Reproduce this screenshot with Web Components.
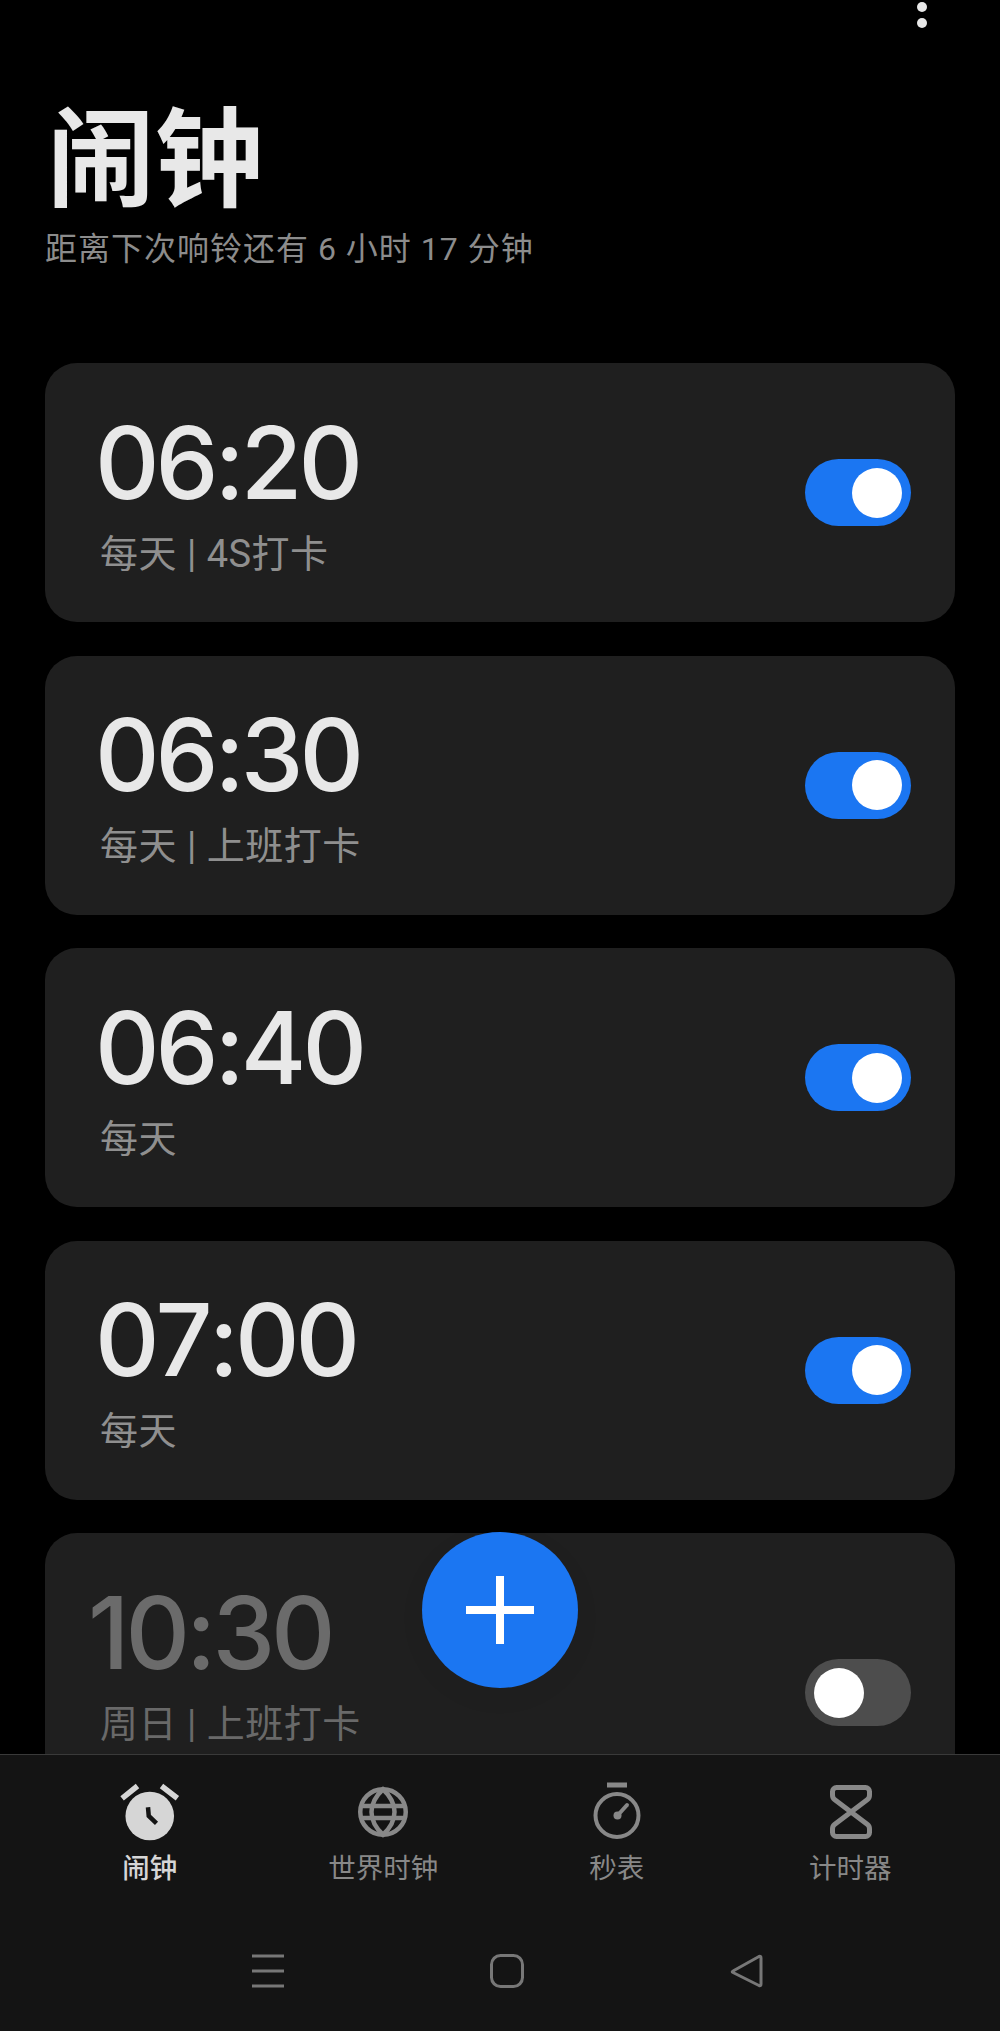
<!DOCTYPE html>
<html lang="zh">
<head>
<meta charset="utf-8">
<title>闹钟</title>
<style>
  html, body { margin: 0; background: #000; }
  body { font-family: Roboto, "Noto Sans CJK SC", sans-serif; }
</style>
</head>
<body>
<clock-app>
  <page-header slot="header" titulo="闹钟" subtitulo="距离下次响铃还有 6 小时 17 分钟"></page-header>
  <alarm-card slot="list" hora="06:20" detalle="每天 | 4S打卡" activa></alarm-card>
  <alarm-card slot="list" hora="06:30" detalle="每天 | 上班打卡" activa></alarm-card>
  <alarm-card slot="list" hora="06:40" detalle="每天" activa></alarm-card>
  <alarm-card slot="list" hora="07:00" detalle="每天" activa></alarm-card>
  <alarm-card slot="list" hora="10:30" detalle="周日 | 上班打卡"></alarm-card>
  <add-button slot="fab"></add-button>
  <tab-bar slot="tabs">
    <tab-item etiqueta="闹钟" icono="alarma" activo></tab-item>
    <tab-item etiqueta="世界时钟" icono="mundo"></tab-item>
    <tab-item etiqueta="秒表" icono="crono"></tab-item>
    <tab-item etiqueta="计时器" icono="reloj-arena"></tab-item>
  </tab-bar>
  <system-nav slot="sistema"></system-nav>
</clock-app>

<script>
class ClockApp extends HTMLElement {
  constructor() {
    super();
    this.attachShadow({ mode: 'open' });
    this.shadowRoot.innerHTML = `
      <style>
        :host { display: flex; flex-direction: column; width: 1000px; height: 2031px; position: relative; overflow: hidden; background: #000; }
        .contenido { flex: 1; min-height: 0; overflow: hidden; }
        .lista { display: flex; flex-direction: column; gap: 33.5px; padding: 0 45px; }
        .dots { display: flex; flex-direction: column; gap: 6px; position: absolute; top: 2px; left: 917px; }
        .dots i { width: 10px; height: 10px; border-radius: 50%; background: #e8e8e8; }
        .pie { background: #141414; border-top: 1px solid #3a3a3a; height: 276px; display: flex; flex-direction: column; }
      </style>
      <div class="dots"><i></i><i></i></div>
      <div class="contenido">
        <slot name="header"></slot>
        <div class="lista"><slot name="list"></slot></div>
      </div>
      <slot name="fab"></slot>
      <div class="pie">
        <slot name="tabs"></slot>
        <slot name="sistema"></slot>
      </div>
    `;
  }
}

class PageHeader extends HTMLElement {
  constructor() {
    super();
    this.attachShadow({ mode: 'open' });
  }
  connectedCallback() {
    this.shadowRoot.innerHTML = `
      <style>
        :host { display: block; height: 363px; box-sizing: border-box; padding: 91px 0 0 45px; }
        h1 { margin: 0 0 0 2px; font: 700 108px/120px "Noto Sans CJK SC", sans-serif; color: #e8e8e8; }
        p { margin: 14px 0 0; font: 400 32px/48px Roboto, "Noto Sans CJK SC", sans-serif; color: #8c8c8c; letter-spacing: 1px; }
      </style>
      <h1>${this.getAttribute('titulo')}</h1>
      <p>${this.getAttribute('subtitulo')}</p>
    `;
  }
}

class AlarmCard extends HTMLElement {
  constructor() {
    super();
    this.attachShadow({ mode: 'open' });
  }
  connectedCallback() {
    const activa = this.hasAttribute('activa');
    this.shadowRoot.innerHTML = `
      <style>
        :host { display: flex; align-items: center; justify-content: space-between; height: 259px; box-sizing: border-box; padding: 0 44px 0 55px; background: #1f1f1f; border-radius: 32px; }
        .hora { font: 450 100px/120px Inter, Roboto, sans-serif; font-kerning: none; color: #e8e8e8; margin: -3px 0 0 -5px; letter-spacing: -4px; }
        .detalle { font: 400 38px/52px Roboto, "Noto Sans CJK SC", sans-serif; color: #8f8f8f; margin-top: 5px; letter-spacing: .5px; }
        :host(:not([activa])) .hora { color: #6b6b6b; margin-left: -12px; }
        :host(:not([activa])) .detalle { color: #696969; }
        :host(:not([activa])) alarm-switch { margin-top: 60px; }
      </style>
      <div>
        <div class="hora">${this.getAttribute('hora')}</div>
        <div class="detalle">${this.getAttribute('detalle')}</div>
      </div>
      <alarm-switch ${activa ? 'activa' : ''}></alarm-switch>
    `;
  }
}

class AlarmSwitch extends HTMLElement {
  constructor() {
    super();
    this.attachShadow({ mode: 'open' });
    this.shadowRoot.innerHTML = `
      <style>
        :host { display: flex; align-items: center; justify-content: flex-start; width: 106px; height: 67px; box-sizing: border-box; padding: 0 9px; border-radius: 34px; background: #4d4d4d; }
        :host([activa]) { background: #1b76f2; justify-content: flex-end; }
        i { width: 50px; height: 50px; border-radius: 50%; background: #fff; }
      </style>
      <i></i>
    `;
  }
}

class AddButton extends HTMLElement {
  constructor() {
    super();
    this.attachShadow({ mode: 'open' });
    this.shadowRoot.innerHTML = `
      <style>
        :host { position: absolute; left: 422px; top: 1532px; width: 156px; height: 156px; border-radius: 50%; background: #1b76f2; display: flex; align-items: center; justify-content: center; box-shadow: 0 8px 30px rgba(0,0,0,.04); }
      </style>
      <svg width="68" height="68" viewBox="0 0 68 68"><path d="M30 0h8v30h30v8H38v30h-8V38H0v-8h30z" fill="#fff"/></svg>
    `;
  }
}

const ICONOS = {
  alarma: `<circle cx="29.750" cy="34" r="24.300" fill="currentColor"/>
    <path d="M2.100 16.300 17.500 4M41.500 4 57.400 16.300" stroke="currentColor" stroke-width="5.500" fill="none"/>
    <path d="M28 25.300l.75 8.700 7.750 7.300" stroke="#141414" stroke-width="4.500" fill="none"/>`,
  mundo: `<g fill="none" stroke="currentColor" stroke-width="4.500">
    <circle cx="30" cy="30" r="22.750"/>
    <path d="M30 7.250Q18.500 18 18.500 30T30 52.750Q41.500 42 41.500 30T30 7.250z"/>
    <path d="M8 24h44M8 36h44"/></g>`,
  crono: `<g fill="none" stroke="currentColor">
    <circle cx="30" cy="33.500" r="21.500" stroke-width="4"/>
    <path d="M20 3h20" stroke-width="5"/>
    <path d="M31 33l9-10" stroke-width="4" stroke-linecap="round"/></g>
    <circle cx="30.500" cy="33.500" r="4" fill="currentColor"/>`,
  'reloj-arena': `<path d="M16.500 5.500h29a4 4 0 0 1 4 4V13q0 3-2 4.500L14.500 42.500q-2 1.500-2 4.500v3.500a4 4 0 0 0 4 4h29a4 4 0 0 0 4-4V47q0-3-2-4.500L14.500 17.500q-2-1.500-2-4.500V9.500a4 4 0 0 1 4-4z" fill="none" stroke="currentColor" stroke-width="5"/>`
};

class TabBar extends HTMLElement {
  constructor() {
    super();
    this.attachShadow({ mode: 'open' });
    this.shadowRoot.innerHTML = `
      <style>
        :host { display: grid; grid-template-columns: repeat(4, 1fr); padding: 0 33px; height: 164px; box-sizing: border-box; }
      </style>
      <slot></slot>
    `;
  }
}

class TabItem extends HTMLElement {
  constructor() {
    super();
    this.attachShadow({ mode: 'open' });
  }
  connectedCallback() {
    this.shadowRoot.innerHTML = `
      <style>
        :host { display: flex; flex-direction: column; align-items: center; padding-top: 27px; color: #888; }
        :host([activo]) { color: #d6d6d6; }
        svg { display: block; width: 60px; height: 60px; }
        span { margin-top: 6px; font: 400 27.500px/36px "Noto Sans CJK SC", sans-serif; }
        :host([activo]) span { font-weight: 500; }
      </style>
      <svg viewBox="0 0 60 60">${ICONOS[this.getAttribute('icono')]}</svg>
      <span>${this.getAttribute('etiqueta')}</span>
    `;
  }
}

class SystemNav extends HTMLElement {
  constructor() {
    super();
    this.attachShadow({ mode: 'open' });
    this.shadowRoot.innerHTML = `
      <style>
        :host { display: flex; justify-content: center; align-items: center; gap: 205px; height: 112px; box-sizing: border-box; color: #777; padding: 0 0 9px 13px; }
        svg { display: block; width: 34px; height: 34px; fill: none; stroke: currentColor; stroke-width: 3; }
      </style>
      <svg viewBox="0 0 34 34"><path d="M1 2h32M1 17h32M1 32h32"/></svg>
      <svg viewBox="0 0 34 34"><rect x="1.500" y="1.500" width="31" height="31" rx="9"/></svg>
      <svg viewBox="0 0 34 34"><path d="M4 17 30 2.500q2-.8 2 1.500v26q0 2.300-2 1.500L4 18.500q-1.600-.8 0-1.500z" stroke-linejoin="round"/></svg>
    `;
  }
}

customElements.define('clock-app', ClockApp);
customElements.define('page-header', PageHeader);
customElements.define('alarm-switch', AlarmSwitch);
customElements.define('alarm-card', AlarmCard);
customElements.define('add-button', AddButton);
customElements.define('tab-bar', TabBar);
customElements.define('tab-item', TabItem);
customElements.define('system-nav', SystemNav);
</script>
</body>
</html>
